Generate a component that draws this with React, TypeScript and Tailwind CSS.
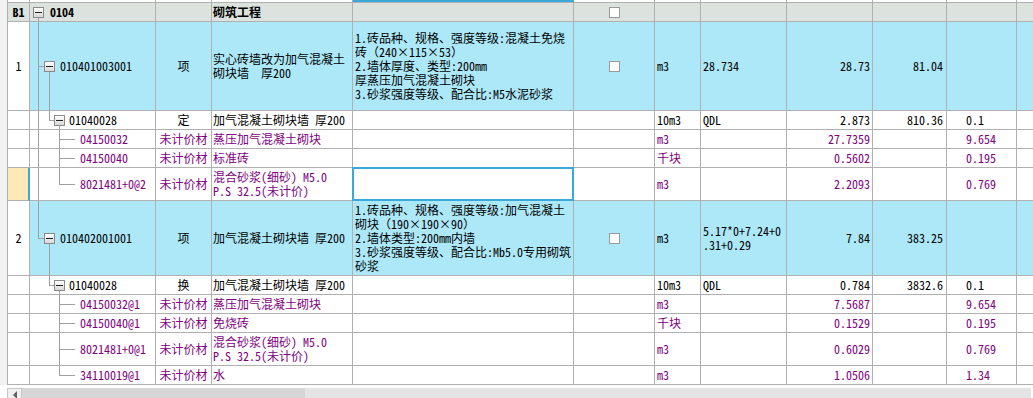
import type { ReactNode } from "react";

const W = {
  no: "w-[22px]",
  code: "w-[126px]",
  type: "w-[56px]",
  name: "w-[141px]",
  desc: "w-[221px]",
  chk: "w-[81px]",
  unit: "w-[46px]",
  expr: "w-[86px]",
  qty: "w-[86px]",
  price: "w-[74px]",
  coef: "w-[70px]",
  rest: "w-[40px]",
};

const BLUE = "bg-[#ade8f8]";
const GRAY = "bg-[#dce3df]";

type Seg = "full" | "top" | "none";

function Guide({ v, h, w = "w-[11px]" }: { v: Seg; h?: boolean; w?: string }) {
  return (
    <div className={`flex flex-col shrink-0 self-stretch ${w}`}>
      <div className={`flex-1 ml-[5px] border-[#a0a0a0] ${v !== "none" ? "border-l" : ""}`} />
      <div
        className={`flex-1 ml-[5px] border-[#a0a0a0] ${v === "full" ? "border-l" : ""} ${h ? "border-t" : ""}`}
      />
    </div>
  );
}

function Box({ line }: { line?: boolean }) {
  return (
    <div className="flex flex-col shrink-0 self-stretch w-[11px]">
      <div className="flex-1" />
      <div className="w-[11px] h-[11px] border border-[#8a8a8a] bg-linear-to-b from-white to-[#d8d8d8] flex items-center justify-center">
        <div className="w-[7px] h-px bg-[#202020]" />
      </div>
      <div className={`flex-1 ml-[5px] border-[#a0a0a0] ${line ? "border-l" : ""}`} />
    </div>
  );
}

function CheckBox() {
  return <div className="w-[11px] h-[11px] border border-[#9a9a9a] bg-white" />;
}

function Lines({ items }: { items: string[] }) {
  return (
    <div className="whitespace-pre">
      {items.map((t, i) => (
        <div key={i}>{t}</div>
      ))}
    </div>
  );
}

type RowProps = {
  h: string;
  bg?: string;
  noBg?: string;
  purple?: boolean;
  bold?: boolean;
  no?: ReactNode;
  tree: ReactNode;
  code: string;
  codeGap?: string;
  type?: string;
  name?: ReactNode;
  desc?: ReactNode;
  check?: boolean;
  unit?: string;
  expr?: ReactNode;
  qty?: string;
  price?: string;
  coef?: string;
  selected?: boolean;
};

function Row(p: RowProps) {
  const bg = p.bg ?? "bg-white";
  const c = `shrink-0 border-r border-b border-[#b0b0b0] flex items-center overflow-hidden ${bg}`;
  return (
    <div
      className={`flex shrink-0 ${p.h} ${p.purple ? "text-[#800080]" : "text-black"} ${p.bold ? "font-bold" : ""}`}
    >
      <div
        className={`shrink-0 border-b border-[#b0b0b0] flex items-center justify-center text-black ${W.no} ${
          p.noBg ?? "bg-white"
        } ${p.selected ? "border-r-2 border-r-[#3aa8d8]" : "border-r"}`}
      >
        {p.no}
      </div>
      <div className={`${c} ${W.code} items-stretch pl-[3px]`}>
        {p.tree}
        <div className={`self-center whitespace-nowrap ${p.codeGap ?? "ml-[5px]"}`}>{p.code}</div>
      </div>
      <div className={`${c} ${W.type} justify-center`}>{p.type}</div>
      <div className={`${c} ${W.name} pl-px`}>{p.name}</div>
      <div className={`${c} ${W.desc} pl-[2px] relative overflow-visible`}>
        {p.desc}
        {p.selected && <div className="absolute -inset-px border-2 border-[#3aa8d8]" />}
      </div>
      <div className={`${c} ${W.chk} justify-center`}>{p.check && <CheckBox />}</div>
      <div className={`${c} ${W.unit} pl-[2px]`}>{p.unit}</div>
      <div className={`${c} ${W.expr} pl-[2px]`}>{p.expr}</div>
      <div className={`${c} ${W.qty} justify-end pr-[2px]`}>{p.qty}</div>
      <div className={`${c} ${W.price} justify-end pr-[3px]`}>{p.price}</div>
      <div className={`${c} ${W.coef} pl-[19px]`}>{p.coef}</div>
      <div className={`${c} ${W.rest}`} />
    </div>
  );
}

const MAT = "未计价材";

export default function App() {
  const mortar = <Lines items={["混合砂浆(细砂) M5.0", "P.S 32.5(未计价)"]} />;
  return (
    <div className="w-[1033px] h-[398px] overflow-hidden bg-white flex flex-col font-['Noto_Sans_Mono_CJK_SC','Noto_Sans_CJK_SC',monospace] text-[12px] leading-[14px]">
      <div className="flex shrink-0">
        <div className="w-[8px] shrink-0 bg-[#f2f2f2] border-r border-[#b0b0b0]" />
        <div className="flex flex-col">
          <div className="flex h-[3px]">
            <div className={`shrink-0 border-r border-b border-[#b0b0b0] ${W.no}`} />
            <div className={`shrink-0 border-r border-b border-[#b0b0b0] ${W.code}`} />
            <div className={`shrink-0 border-r border-b border-[#b0b0b0] ${W.type}`} />
            <div className={`shrink-0 border-r border-b border-[#b0b0b0] ${W.name}`} />
            <div className={`shrink-0 border-b border-[#b0b0b0] bg-[#3aa8d8] ${W.desc}`} />
            <div className={`shrink-0 border-r border-b border-[#b0b0b0] ${W.chk}`} />
            <div className={`shrink-0 border-r border-b border-[#b0b0b0] ${W.unit}`} />
            <div className={`shrink-0 border-r border-b border-[#b0b0b0] ${W.expr}`} />
            <div className={`shrink-0 border-r border-b border-[#b0b0b0] ${W.qty}`} />
            <div className={`shrink-0 border-r border-b border-[#b0b0b0] ${W.price}`} />
            <div className={`shrink-0 border-r border-b border-[#b0b0b0] ${W.coef}`} />
            <div className={`shrink-0 border-b border-[#b0b0b0] ${W.rest}`} />
          </div>

          <Row
            h="h-[19px]"
            bg={GRAY}
            noBg={GRAY}
            bold
            no="B1"
            tree={<Box line />}
            code="0104"
            codeGap="ml-[6px]"
            name="砌筑工程"
            check
          />
          <Row
            h="h-[89px]"
            bg={BLUE}
            no="1"
            tree={
              <>
                <Guide v="full" h />
                <Box line />
              </>
            }
            code="010401003001"
            type="项"
            name={<Lines items={["实心砖墙改为加气混凝土", "砌块墙  厚200"]} />}
            desc={
              <Lines
                items={[
                  "1.砖品种、规格、强度等级:混凝土免烧",
                  "砖（240×115×53）",
                  "2.墙体厚度、类型:200mm",
                  "厚蒸压加气混凝土砌块",
                  "3.砂浆强度等级、配合比:M5水泥砂浆",
                ]}
              />
            }
            check
            unit="m3"
            expr="28.734"
            qty="28.73"
            price="81.04"
          />
          <Row
            h="h-[19px]"
            tree={
              <>
                <Guide v="full" />
                <Guide v="top" h w="w-[10px]" />
                <Box line />
              </>
            }
            code="01040028"
            codeGap="ml-[4px]"
            type="定"
            name="加气混凝土砌块墙 厚200"
            unit="10m3"
            expr="QDL"
            qty="2.873"
            price="810.36"
            coef="0.1"
          />
          <Row
            h="h-[19px]"
            purple
            tree={
              <>
                <Guide v="full" />
                <Guide v="none" w="w-[10px]" />
                <Guide v="full" h w="w-[21px]" />
              </>
            }
            code="04150032"
            type={MAT}
            name="蒸压加气混凝土砌块"
            unit="m3"
            qty="27.7359"
            coef="9.654"
          />
          <Row
            h="h-[19px]"
            purple
            tree={
              <>
                <Guide v="full" />
                <Guide v="none" w="w-[10px]" />
                <Guide v="full" h w="w-[21px]" />
              </>
            }
            code="04150040"
            type={MAT}
            name="标准砖"
            unit="千块"
            qty="0.5602"
            coef="0.195"
          />
          <Row
            h="h-[33px]"
            purple
            selected
            noBg="bg-[#fce9b7]"
            tree={
              <>
                <Guide v="full" />
                <Guide v="none" w="w-[10px]" />
                <Guide v="top" h w="w-[21px]" />
              </>
            }
            code="8021481+0@2"
            type={MAT}
            name={mortar}
            unit="m3"
            qty="2.2093"
            coef="0.769"
          />
          <Row
            h="h-[75px]"
            bg={BLUE}
            no="2"
            tree={
              <>
                <Guide v="top" h />
                <Box line />
              </>
            }
            code="010402001001"
            type="项"
            name="加气混凝土砌块墙 厚200"
            desc={
              <Lines
                items={[
                  "1.砖品种、规格、强度等级:加气混凝土",
                  "砌块（190×190×90）",
                  "2.墙体类型:200mm内墙",
                  "3.砂浆强度等级、配合比:Mb5.0专用砌筑",
                  "砂浆",
                ]}
              />
            }
            check
            unit="m3"
            expr={<Lines items={["5.17*0+7.24+0", ".31+0.29"]} />}
            qty="7.84"
            price="383.25"
          />
          <Row
            h="h-[19px]"
            tree={
              <>
                <Guide v="none" />
                <Guide v="top" h w="w-[10px]" />
                <Box line />
              </>
            }
            code="01040028"
            codeGap="ml-[4px]"
            type="换"
            name="加气混凝土砌块墙 厚200"
            unit="10m3"
            expr="QDL"
            qty="0.784"
            price="3832.6"
            coef="0.1"
          />
          <Row
            h="h-[19px]"
            purple
            tree={
              <>
                <Guide v="none" />
                <Guide v="none" w="w-[10px]" />
                <Guide v="full" h w="w-[21px]" />
              </>
            }
            code="04150032@1"
            type={MAT}
            name="蒸压加气混凝土砌块"
            unit="m3"
            qty="7.5687"
            coef="9.654"
          />
          <Row
            h="h-[19px]"
            purple
            tree={
              <>
                <Guide v="none" />
                <Guide v="none" w="w-[10px]" />
                <Guide v="full" h w="w-[21px]" />
              </>
            }
            code="04150040@1"
            type={MAT}
            name="免烧砖"
            unit="千块"
            qty="0.1529"
            coef="0.195"
          />
          <Row
            h="h-[33px]"
            purple
            tree={
              <>
                <Guide v="none" />
                <Guide v="none" w="w-[10px]" />
                <Guide v="full" h w="w-[21px]" />
              </>
            }
            code="8021481+0@1"
            type={MAT}
            name={mortar}
            unit="m3"
            qty="0.6029"
            coef="0.769"
          />
          <Row
            h="h-[19px]"
            purple
            tree={
              <>
                <Guide v="none" />
                <Guide v="none" w="w-[10px]" />
                <Guide v="top" h w="w-[21px]" />
              </>
            }
            code="34110019@1"
            type={MAT}
            name="水"
            unit="m3"
            qty="1.0506"
            coef="1.34"
          />
        </div>
      </div>

      {/* horizontal scrollbar */}
      <div className="flex h-[13px] mt-[3px] shrink-0">
        <div className="w-[7px] shrink-0 bg-white" />
        <div className="w-[15px] shrink-0 border border-[#c8c8c8] bg-[#f0f0f0] flex items-center justify-center">
          <div className="w-0 h-0 border-y-[4px] border-y-transparent border-r-[4px] border-r-[#606060]" />
        </div>
        <div className="w-[283px] shrink-0 bg-[#d6d6d6]" />
        <div className="w-[726px] shrink-0 bg-[#e4e4e4]" />
        <div className="flex-1 bg-white" />
      </div>
    </div>
  );
}
